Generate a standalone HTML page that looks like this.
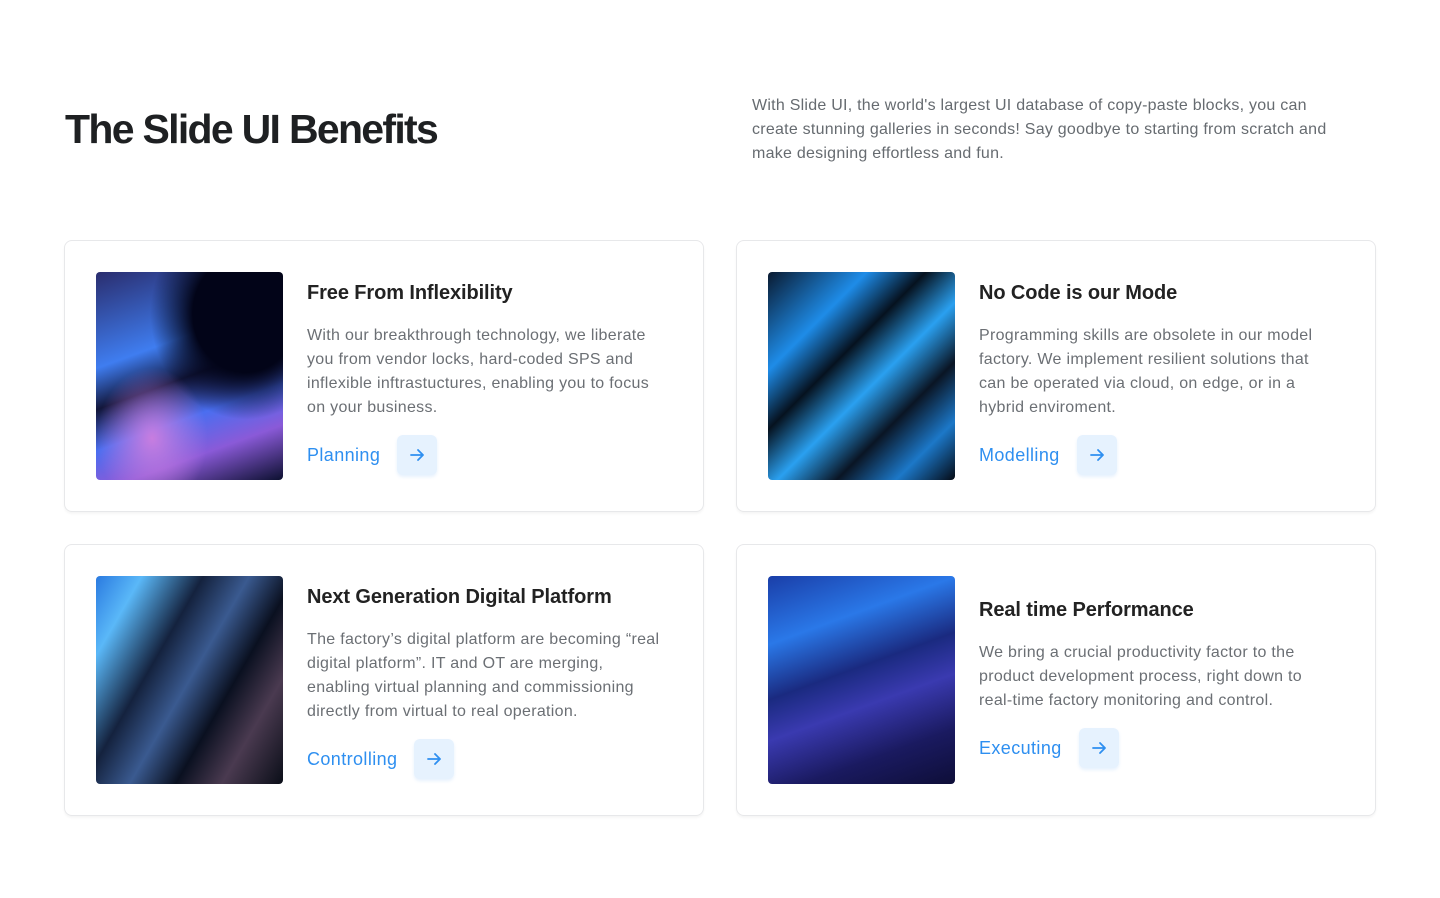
<!DOCTYPE html>
<html><head><meta charset="utf-8"><style>
*{margin:0;padding:0;box-sizing:border-box}
body{width:1440px;height:898px;background:#fff;font-family:"Liberation Sans",sans-serif;position:relative;overflow:hidden}
h1{position:absolute;left:65px;top:106px;font-size:41px;font-weight:700;color:#1e2022;letter-spacing:-1.7px}
.intro{position:absolute;left:752px;top:94px;width:640px;font-size:16px;line-height:24px;color:#666b70;letter-spacing:.25px;white-space:nowrap}
.card{position:absolute;width:640px;height:272px;border:1px solid #e7e8ea;border-radius:8px;box-shadow:0 2px 2px rgba(0,0,0,.04)}
.img{position:absolute;left:31px;top:31px;width:187px;height:208px;border-radius:4px;overflow:hidden}
.txt{position:absolute;left:242px;width:385px}
.txt h3{font-size:20px;font-weight:700;color:#222;letter-spacing:-.1px;line-height:28px}
.txt p{margin-top:17px;font-size:16px;line-height:24px;color:#6b6f74;letter-spacing:.3px;white-space:nowrap}
.lk{margin-top:15px;display:flex;align-items:center}
.lk span{font-size:18px;color:#2e8ff0;margin-right:17px;letter-spacing:.4px}
.btn{width:40px;height:40px;border-radius:6px;background:#e6f2fe;display:flex;align-items:center;justify-content:center;box-shadow:0 2px 3px rgba(46,143,240,.12)}
</style></head><body>
<h1>The Slide UI Benefits</h1>
<div class="intro">With Slide UI, the world's largest UI database of copy-paste blocks, you can<br>create stunning galleries in seconds! Say goodbye to starting from scratch and<br>make designing effortless and fun.</div>

<div class="card" style="left:64px;top:240px">
<div class="img" style="background:radial-gradient(ellipse at 80% 20%,#020418 25%,transparent 45%),radial-gradient(ellipse at 30% 80%,#c87de0 0%,transparent 30%),linear-gradient(160deg,#2a2d6e 0%,#3f7df0 35%,#12163a 50%,#4a6ef0 65%,#8a5ad8 80%,#0c1030 100%)"></div>
<div class="txt" style="top:38px"><h3>Free From Inflexibility</h3>
<p>With our breakthrough technology, we liberate<br>you from vendor locks, hard-coded SPS and<br>inflexible inftrastuctures, enabling you to focus<br>on your business.</p>
<div class="lk"><span>Planning</span><div class="btn"><svg width="18" height="18" viewBox="0 0 18 18" fill="none" stroke="#2e8ff0" stroke-width="1.8" stroke-linecap="round" stroke-linejoin="round"><path d="M3 9h12M10 4l5 5-5 5"/></svg></div></div></div>
</div>

<div class="card" style="left:736px;top:240px">
<div class="img" style="background:linear-gradient(135deg,#0a1a30 0%,#1e8ce8 25%,#06121f 40%,#2aa0f0 55%,#0a1524 70%,#1c78c8 85%,#050a14 100%)"></div>
<div class="txt" style="top:38px"><h3>No Code is our Mode</h3>
<p>Programming skills are obsolete in our model<br>factory. We implement resilient solutions that<br>can be operated via cloud, on edge, or in a<br>hybrid enviroment.</p>
<div class="lk"><span>Modelling</span><div class="btn"><svg width="18" height="18" viewBox="0 0 18 18" fill="none" stroke="#2e8ff0" stroke-width="1.8" stroke-linecap="round" stroke-linejoin="round"><path d="M3 9h12M10 4l5 5-5 5"/></svg></div></div></div>
</div>

<div class="card" style="left:64px;top:544px">
<div class="img" style="background:linear-gradient(120deg,#2a7ae0 0%,#5ab8f8 15%,#14223e 35%,#3a5a90 50%,#0a1020 65%,#4a3a50 80%,#0a0e18 100%)"></div>
<div class="txt" style="top:38px"><h3>Next Generation Digital Platform</h3>
<p>The factory’s digital platform are becoming “real<br>digital platform”. IT and OT are merging,<br>enabling virtual planning and commissioning<br>directly from virtual to real operation.</p>
<div class="lk"><span>Controlling</span><div class="btn"><svg width="18" height="18" viewBox="0 0 18 18" fill="none" stroke="#2e8ff0" stroke-width="1.8" stroke-linecap="round" stroke-linejoin="round"><path d="M3 9h12M10 4l5 5-5 5"/></svg></div></div></div>
</div>

<div class="card" style="left:736px;top:544px">
<div class="img" style="background:linear-gradient(160deg,#1a3ea8 0%,#2a78e8 25%,#1a2a80 45%,#3a3ab0 60%,#1a1a60 80%,#0e0e38 100%)"></div>
<div class="txt" style="top:51px"><h3>Real time Performance</h3>
<p>We bring a crucial productivity factor to the<br>product development process, right down to<br>real-time factory monitoring and control.</p>
<div class="lk"><span>Executing</span><div class="btn"><svg width="18" height="18" viewBox="0 0 18 18" fill="none" stroke="#2e8ff0" stroke-width="1.8" stroke-linecap="round" stroke-linejoin="round"><path d="M3 9h12M10 4l5 5-5 5"/></svg></div></div></div>
</div>
</body></html>
